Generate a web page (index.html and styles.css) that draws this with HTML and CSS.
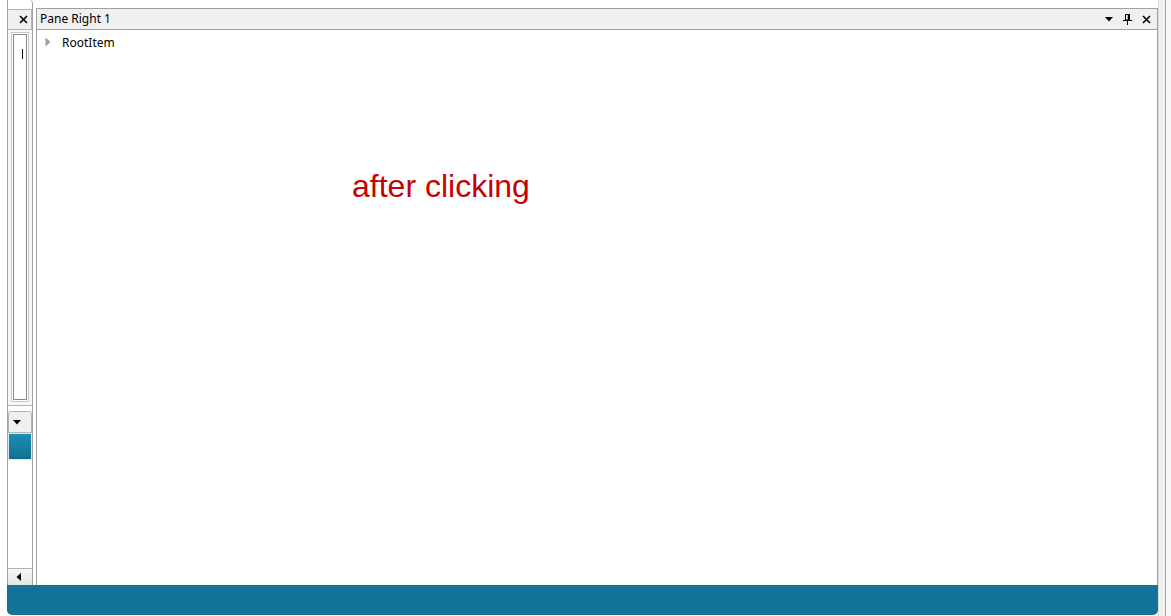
FILE: index.html
```html
<!DOCTYPE html>
<html>
<head>
  <title>Dock Layout</title>
  <link rel="stylesheet" href="styles.css">
</head>
<body>
  <div class="window">
    <div class="dock">
      <div class="top">
        <div class="side">
          <div class="side-tab">
            <svg width="9" height="9" viewBox="0 0 9 9"><path d="M1 1L8 8M8 1L1 8" stroke="#000" stroke-width="1.6"/></svg>
          </div>
          <div class="side-panel">
            <div class="side-frame">
              <div class="side-inner"><span class="caret-mark"></span></div>
            </div>
          </div>
          <div class="side-drop">
            <svg width="8" height="5" viewBox="0 0 8 5"><path d="M0 0H8L4 4.5Z" fill="#000"/></svg>
          </div>
          <div class="side-selected"></div>
          <div class="side-list"></div>
          <div class="side-scroll">
            <svg width="5" height="8" viewBox="0 0 5 8"><path d="M5 0V8L0.5 4Z" fill="#000"/></svg>
          </div>
        </div>

        <div class="pane">
          <div class="pane-header">
            <span class="pane-title">Pane Right 1</span>
            <div class="pane-tools">
              <svg width="8" height="5" viewBox="0 0 8 5"><path d="M0 0H8L4 4.5Z" fill="#000"/></svg>
              <svg width="9" height="11" viewBox="0 0 9 11"><path d="M2.5 0.5H6.5V6H2.5Z" fill="none" stroke="#000"/><path d="M5.5 0.5V6" stroke="#000" stroke-width="1.5"/><path d="M0 6.5H9" stroke="#000"/><path d="M4.5 6.5V11" stroke="#000"/></svg>
              <svg width="9" height="9" viewBox="0 0 9 9"><path d="M1 1L8 8M8 1L1 8" stroke="#000" stroke-width="1.6"/></svg>
            </div>
          </div>
          <div class="pane-body">
            <div class="tree-row">
              <svg width="6" height="10" viewBox="0 0 6 10"><path d="M0.5 0.5V9.5L5.5 5Z" fill="#a0a0a0"/></svg>
              <span>RootItem</span>
            </div>
            <div class="note">after clicking</div>
          </div>
        </div>
      </div>
      <div class="statusbar"></div>
    </div>
    <div class="edge"></div>
  </div>
</body>
</html>
```

FILE: styles.css
```css
body {
  margin: 0;
  background: #fff;
  font-family: "Noto Sans", "Open Sans", sans-serif;
  font-size: 12px;
  color: #000;
}
.window {
  display: flex;
  width: 1171px;
  height: 616px;
}
.dock {
  flex: 1;
  min-width: 0;
  display: flex;
  flex-direction: column;
  padding: 0 0 1px 7px;
}
.top {
  flex: 1;
  display: flex;
  gap: 3px;
}
.side {
  width: 24px;
  display: flex;
  flex-direction: column;
  border-left: 1px solid #a0a0a0;
  border-right: 1px solid #a0a0a0;
  border-top-right-radius: 4px;
  padding-top: 9px;
}
.side-tab {
  height: 20px;
  background: #f0f0f0;
  border-top: 1px solid #b4b4b4;
  border-right: 1px solid #b4b4b4;
  box-sizing: border-box;
  display: flex;
  align-items: center;
  justify-content: flex-end;
  padding-right: 3px;
}
.side-panel {
  height: 377px;
  border-top: 1px solid #b4b4b4;
  border-bottom: 1px solid #b4b4b4;
  background: #f6f6f6;
  box-sizing: border-box;
  padding: 2px 3px 3px 3px;
}
.side-frame {
  height: 100%;
  box-sizing: border-box;
  border: 1px solid #c8c8c8;
  background: #fff;
  padding: 1px;
}
.side-inner {
  height: 100%;
  box-sizing: border-box;
  border: 1px solid #8a8a8a;
  position: relative;
}
.caret-mark {
  position: absolute;
  left: 8px;
  top: 14px;
  width: 1px;
  height: 10px;
  background: #000;
}
.side-drop {
  margin-top: 5px;
  height: 22px;
  background: #f0f0f0;
  border: 1px solid #b4b4b4;
  border-radius: 3px 3px 0 0;
  box-sizing: border-box;
  display: flex;
  align-items: center;
  justify-content: center;
  padding-top: 1px;
  padding-right: 7px;
}
.side-selected {
  height: 27px;
  background: linear-gradient(#1e8db4, #0f6f92);
  border: 1px solid #d8e8ee;
  box-sizing: border-box;
}
.side-list {
  flex: 1;
  background: #fff;
}
.side-scroll {
  height: 17px;
  background: linear-gradient(#f8f8f8, #e4e4e4);
  border-top: 1px solid #b4b4b4;
  box-sizing: border-box;
  display: flex;
  align-items: center;
  justify-content: center;
  padding-right: 4px;
}
.pane {
  flex: 1;
  min-width: 0;
  display: flex;
  flex-direction: column;
  border: 1px solid #a0a0a0;
  border-bottom: none;
  margin-top: 8px;
}
.pane-header {
  height: 20px;
  background: #f0f0f0;
  border-bottom: 1px solid #a0a0a0;
  display: flex;
  align-items: center;
  padding: 0 6px 0 3px;
}
.pane-title {
  flex: 1;
  line-height: 20px;
}
.pane-tools {
  display: flex;
  align-items: center;
  gap: 10px;
}
.pane-body {
  flex: 1;
  background: #fff;
  position: relative;
}
.tree-row {
  display: flex;
  align-items: center;
  gap: 11px;
  padding: 3px 0 0 8px;
  height: 18px;
}
.note {
  position: absolute;
  left: 315px;
  top: 138px;
  font-family: "Liberation Sans", Arial, sans-serif;
  font-size: 32px;
  color: #c80000;
}
.statusbar {
  height: 30px;
  background: #11739a;
  border-radius: 0 0 5px 5px;
}
.edge {
  flex: 0 0 13px;
  background: linear-gradient(to right, #dcdcdc 0, #dcdcdc 1px, #f0f0f0 1px, #f0f0f0 7px, #a8a8a8 7px, #a8a8a8 8px, #f6f6f6 8px);
}
```
